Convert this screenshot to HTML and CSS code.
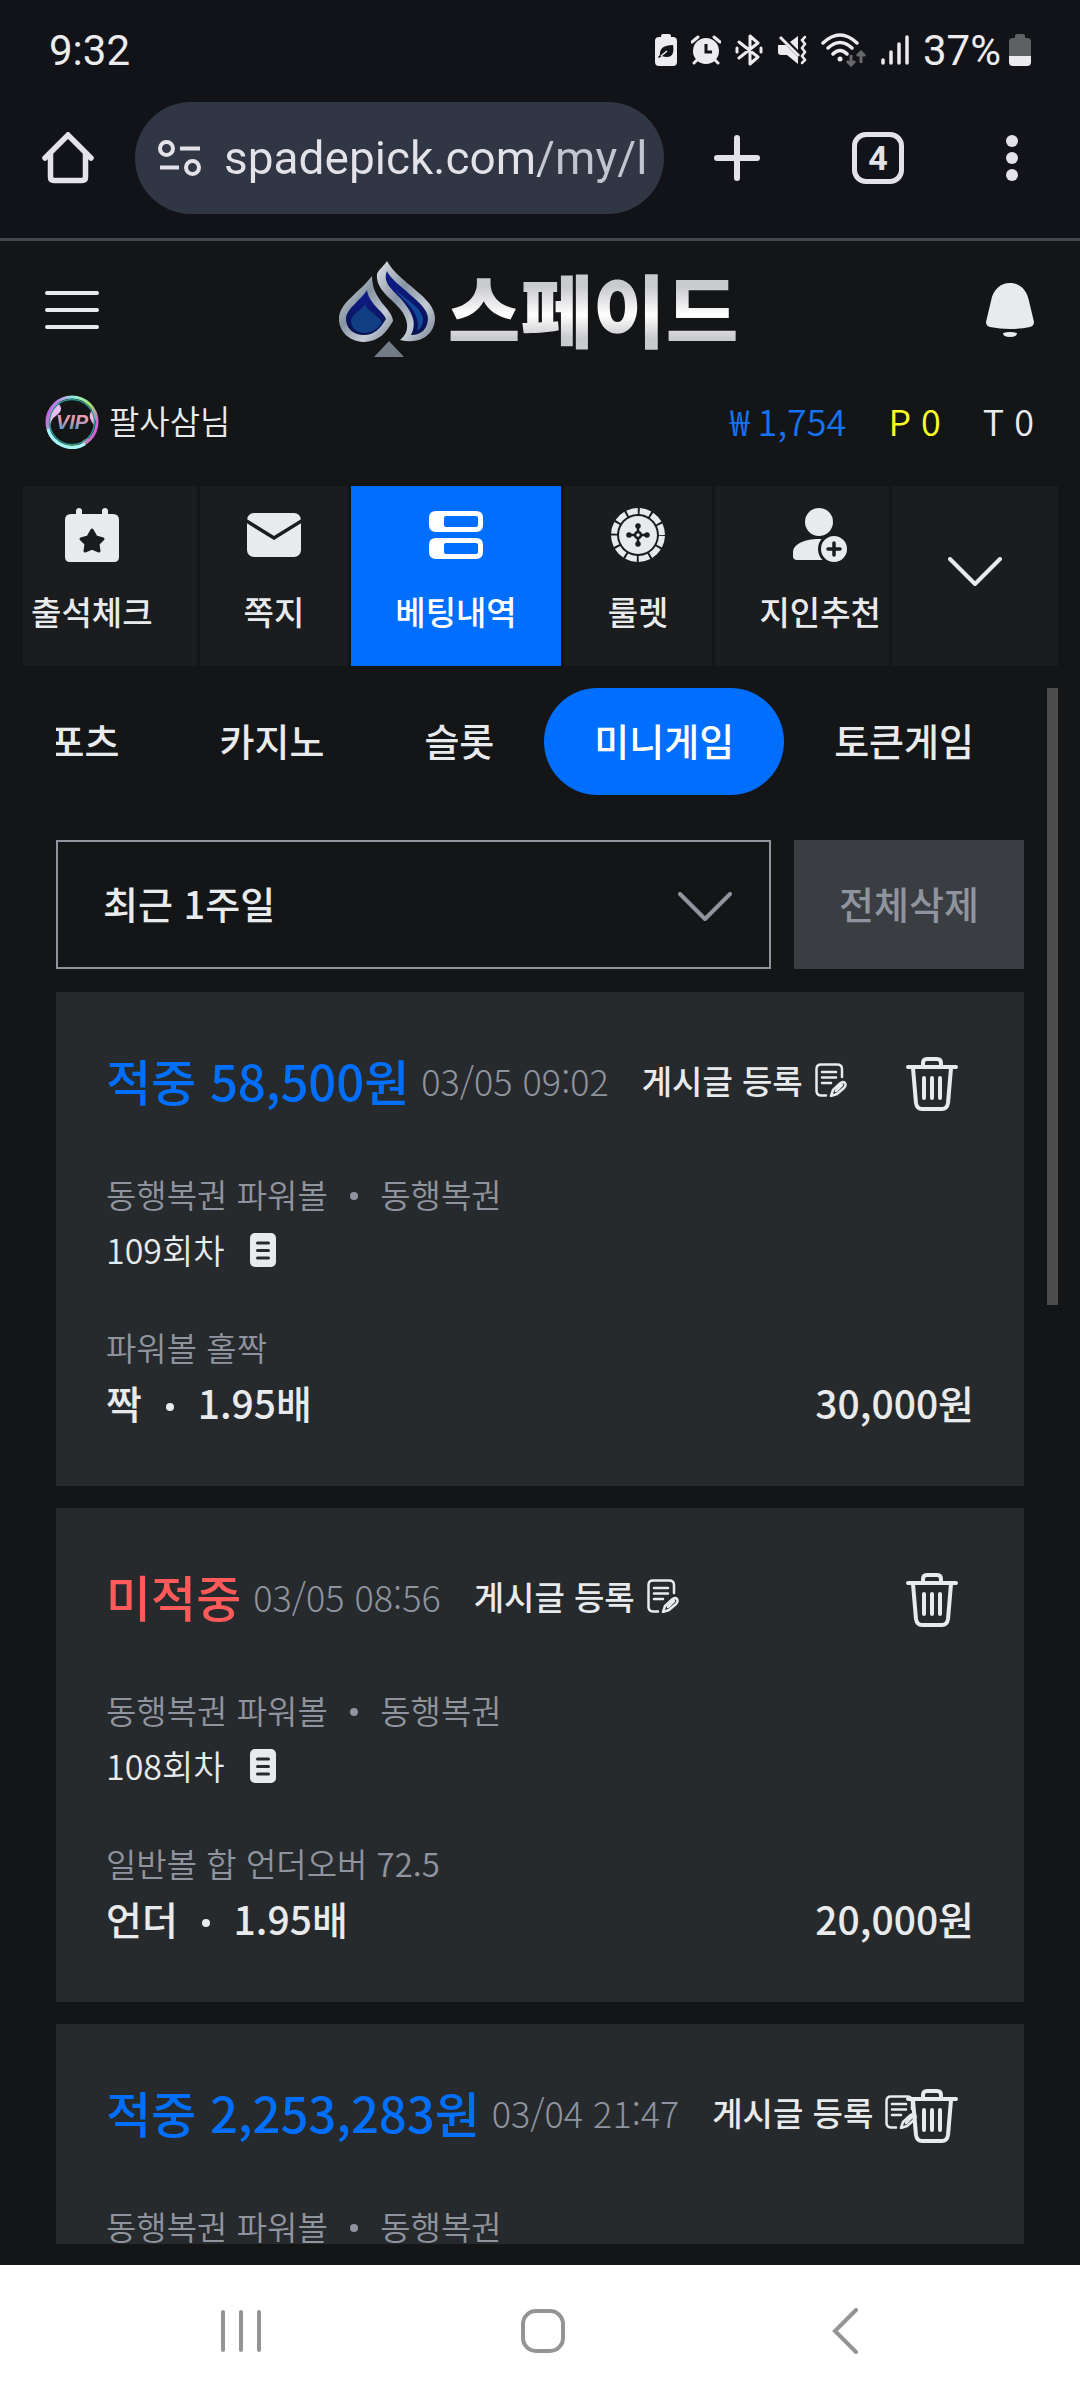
FILE: index.html
```html
<!DOCTYPE html>
<html lang="ko">
<head>
    <meta charset="UTF-8">
    <meta name="viewport" content="width=device-width, initial-scale=1.0">
    <title>스페이드 - 베팅내역</title>
    <link rel="stylesheet" href="styles.css">
</head>
<body>
    <!-- shared icons -->
    <svg class="sprite" aria-hidden="true">
        <symbol id="icon-trash" viewBox="0 0 52 54">
            <g fill="none" stroke="currentColor" stroke-width="4" stroke-linecap="round" stroke-linejoin="round">
                <path d="M2 10H50M17 9V6Q17 2 21 2H31Q35 2 35 6V9"/>
                <path d="M7 11L10 46Q11 52 16 52H36Q41 52 42 46L45 11"/>
                <path d="M18 21V41M26 21V41M34 21V41"/>
            </g>
        </symbol>
        <symbol id="icon-post" viewBox="0 0 32 34">
            <g fill="none" stroke="currentColor" stroke-width="2.500" stroke-linecap="round" stroke-linejoin="round">
                <path d="M11 32.500H6Q1.500 32 1.500 28V6Q1.500 1.500 6 1.500H22Q27 1.500 27 6V14"/>
                <path d="M7 9H21M7 14.500H21M7 20H16"/>
                <path d="M16 33L18 27L25 20.500Q28 18 30 20Q31.500 22 29 25L22 31ZM21 28L27 22"/>
            </g>
        </symbol>
        <symbol id="icon-doc" viewBox="0 0 26 34">
            <rect width="26" height="34" rx="5" fill="currentColor"/>
            <path d="M7.500 10H18.500M7.500 17.500H18.500M7.500 25H18.500" stroke="#272a2d" stroke-width="3" stroke-linecap="round"/>
        </symbol>
        <symbol id="icon-down" viewBox="0 0 54 30">
            <path d="M2 2L27 27L52 2" fill="none" stroke="currentColor" stroke-width="4" stroke-linecap="round" stroke-linejoin="round"/>
        </symbol>
    </svg>

    <div class="status-bar">
        <span>9:32</span>
        <div class="status-icons">
            <svg width="22" height="32" viewBox="0 0 22 32"><path d="M6 3V2Q6 0 8 0H14Q16 0 16 2V3H18Q22 3 22 7V28Q22 32 18 32H4Q0 32 0 28V7Q0 3 4 3Z" fill="#ececee"/><path d="M18 11Q20 23 12 23Q9 23 7 22L4 24L3 23L5 21Q4 11 18 11Z" fill="#121318"/><path d="M6 22L12 17" stroke="#ececee" stroke-width="1.500"/></svg>
            <svg width="30" height="30" viewBox="0 0 30 30"><circle cx="15" cy="16" r="13" fill="#ececee"/><path d="M1 7L7 2M29 7L23 2M6 25L3 28M24 25L27 28" stroke="#ececee" stroke-width="3" stroke-linecap="round"/><path d="M15 9V17H21" fill="none" stroke="#121318" stroke-width="3"/></svg>
            <svg width="28" height="32" viewBox="0 0 28 32"><path d="M4 8L23 23L15 30V2L23 9L4 24M2 14V18M26 14V18" fill="none" stroke="#ececee" stroke-width="3" stroke-linecap="round" stroke-linejoin="round"/></svg>
            <svg width="30" height="30" viewBox="0 0 30 30"><path d="M1 10H9L21 22V29L10 20H4Q1 20 1 17ZM13 7L21 1V15Z" fill="#ececee"/><path d="M3 2L22 21" stroke="#ececee" stroke-width="3"/><path d="M28 2L25 5L28 9L25 13L28 17L25 21L28 25L25 28" fill="none" stroke="#ececee" stroke-width="2.500" stroke-linecap="round"/></svg>
            <svg width="46" height="34" viewBox="0 0 46 34"><g fill="none" stroke="#ececee" stroke-width="3.500" stroke-linecap="round"><path d="M2 10Q19 -6 36 10M7 15Q19 4 31 15M12 21Q19 14 26 21"/></g><circle cx="19" cy="26" r="2.500" fill="#ececee"/><path d="M30 22V31M26 28L30 32L34 28M40 30V20M36 23L40 19L44 23" fill="none" stroke="#68696c" stroke-width="3"/></svg>
            <svg width="28" height="30" viewBox="0 0 28 30"><path d="M2 25V28M10 17V28M18 9V28M26 2V28" stroke="#ececee" stroke-width="3.500" stroke-linecap="round"/></svg>
            <span class="battery-text">37%</span>
            <svg width="22" height="32" viewBox="0 0 22 32"><path d="M6 4V2Q6 0 8 0H14Q16 0 16 2V4H18Q22 4 22 8V22H0V8Q0 4 4 4Z" fill="#5f6062"/><path d="M0 22H22V28Q22 32 18 32H4Q0 32 0 28Z" fill="#ececee"/></svg>
        </div>
    </div>

    <div class="browser-bar">
        <button class="bar-btn" aria-label="Home">
            <svg width="52" height="52" viewBox="0 0 52 52"><path d="M3 26L26 3L49 26M8.500 22V45Q8.500 48.500 12 48.500H40Q43.500 48.500 43.500 45V22" fill="none" stroke="currentColor" stroke-width="5.500" stroke-linecap="round" stroke-linejoin="miter"/></svg>
        </button>
        <label class="url-box">
            <svg width="44" height="36" viewBox="0 0 44 36"><g fill="none" stroke="currentColor" stroke-width="4"><circle cx="8.500" cy="8.500" r="6.500"/><circle cx="34.500" cy="27.500" r="6.500"/><path d="M22 8.500H42M2 27.500H21"/></g></svg>
            <input class="url-input" type="text" value="spadepick.com/my/l" aria-label="URL">
        </label>
        <div class="bar-actions">
            <button class="bar-btn" aria-label="New tab">
                <svg width="46" height="46" viewBox="0 0 46 46"><path d="M23 3V43M3 23H43" stroke="currentColor" stroke-width="6" stroke-linecap="round"/></svg>
            </button>
            <button class="bar-btn tab-count" aria-label="Tabs">4</button>
            <button class="bar-btn" aria-label="Menu">
                <svg width="12" height="46" viewBox="0 0 12 46"><g fill="currentColor"><circle cx="6" cy="6" r="6"/><circle cx="6" cy="23" r="6"/><circle cx="6" cy="40" r="6"/></g></svg>
            </button>
        </div>
    </div>

    <header class="site-header">
        <button class="icon-btn" aria-label="메뉴">
            <svg width="54" height="38" viewBox="0 0 54 38"><path d="M2 2H52M2 19H52M2 36H52" stroke="currentColor" stroke-width="4" stroke-linecap="round"/></svg>
        </button>
        <a class="logo" href="#">
            <svg width="97" height="97" viewBox="0 0 97 97">
                <defs>
                    <linearGradient id="silver" x1="0" y1="0" x2="1" y2="1">
                        <stop offset="0" stop-color="#dfe3e8"/>
                        <stop offset="0.4" stop-color="#8794a3"/>
                        <stop offset="0.7" stop-color="#c3ccd6"/>
                        <stop offset="1" stop-color="#75808e"/>
                    </linearGradient>
                    <linearGradient id="navy" x1="0" y1="0" x2="0" y2="1">
                        <stop offset="0" stop-color="#101c8c"/>
                        <stop offset="1" stop-color="#08124e"/>
                    </linearGradient>
                </defs>
                <path d="M33 15C20 32 0 42 0 58C0 71 11 81 26 81C40 80 47 72 54 60C54 48 33 40 33 15Z" fill="url(#silver)"/>
                <path d="M28 29C21 40 7 48 7 58C7 67 14 74 25 74C35 74 41 68 47 58C44 50 30 43 28 29Z" fill="url(#navy)"/>
                <path d="M26 43C22 50 12 53 12 60C13 69 19 72 26 72C34 72 40 67 43 61C38 53 29 51 26 43Z" fill="#113d83"/>
                <path d="M48 0C60 22 96 36 96 57C96 73 82 84 61 79C70 72 70 62 64 52C57 40 36 30 38 13C39 9 45 5 48 0Z" fill="url(#silver)"/>
                <path d="M48 10C54 24 89 42 89 57C89 68 82 74 72 74C79 61 72 50 62 38C54 29 43 22 48 10Z" fill="url(#navy)"/>
                <path d="M56 28C64 37 83 46 84 58Q84 66 78 70Q81 60 74 49C68 40 60 35 56 28Z" fill="#12489a"/>
                <path d="M50 80L65 96H35Z" fill="#727c86"/>
            </svg>
            <span class="logo-text">스페이드</span>
        </a>
        <button class="icon-btn" aria-label="알림">
            <svg width="48" height="54" viewBox="0 0 48 54"><path d="M24 0C34 0 41 7 43 18L48 39Q48 43 44 44Q24 48 4 44Q0 43 0 39L5 18C7 7 14 0 24 0ZM17 50Q24 48 31 50Q31 54 24 54Q17 54 17 50Z" fill="currentColor"/></svg>
        </button>
    </header>

    <div class="user-row">
        <div class="user-name">
            <svg width="54" height="54" viewBox="0 0 54 54">
                <defs>
                    <linearGradient id="ring" x1="0" y1="0.3" x2="1" y2="0.7">
                        <stop offset="0" stop-color="#c65be0"/>
                        <stop offset="0.35" stop-color="#8ff0e0"/>
                        <stop offset="0.7" stop-color="#a8e26a"/>
                        <stop offset="1" stop-color="#d94fe8"/>
                    </linearGradient>
                    <linearGradient id="vip" x1="0" y1="0" x2="0" y2="1">
                        <stop offset="0.4" stop-color="#e79bb0"/>
                        <stop offset="0.8" stop-color="#5f9ccc"/>
                    </linearGradient>
                </defs>
                <path d="M12 7Q20 14 12 20Q4 25 5 36Q-1 20 12 7ZM48 14Q41 20 49 30Q52 22 48 14ZM36 48Q40 43 44 44L38 50Z" fill="#e9bdf0"/>
                <circle cx="27" cy="27" r="25" fill="none" stroke="url(#ring)" stroke-width="3"/>
                <circle cx="27" cy="27" r="22.500" fill="none" stroke="#2d8f8f" stroke-width="1.500"/>
                <path d="M3 34A25 25 0 0 0 40 49" fill="none" stroke="#a5f3f5" stroke-width="3"/>
                <text x="27" y="34" text-anchor="middle" class="vip-text" fill="url(#vip)">VIP</text>
            </svg>
            <span>팔사삼님</span>
        </div>
        <div class="balances">
            <span class="won">₩ 1,754</span>
            <span class="point">P 0</span>
            <span>T 0</span>
        </div>
    </div>

    <div class="menu-row">
        <nav class="menu">
            <a class="menu-item" href="#">
                <svg width="54" height="54" viewBox="0 0 54 54"><path d="M11 6V3Q11 0 14 0Q17 0 17 3V6H37V3Q37 0 40 0Q43 0 43 3V6H48Q54 6 54 12V49Q54 54 49 54H5Q0 54 0 49V12Q0 6 6 6Z" fill="currentColor"/><path d="M27 22L31 29L38 31L33 36L34 43L27 40L20 43L21 36L16 31L23 29Z" fill="#1b1c1e" stroke="#1b1c1e" stroke-width="3" stroke-linejoin="round"/></svg>
                출석체크
            </a>
            <a class="menu-item" href="#">
                <svg width="54" height="54" viewBox="0 0 54 54"><rect y="5" width="54" height="44" rx="7" fill="currentColor"/><path d="M-2 12L27 30L56 12" fill="none" stroke="#1b1c1e" stroke-width="3.500"/></svg>
                쪽지
            </a>
            <a class="menu-item active" href="#">
                <svg width="54" height="54" viewBox="0 0 54 54"><path fill-rule="evenodd" d="M7 3H47Q54 3 54 10V17Q54 24 47 24H7Q0 24 0 17V10Q0 3 7 3ZM17 8Q15 8 15 10V17Q15 19 17 19H47Q49 19 49 17V10Q49 8 47 8ZM7 30H47Q54 30 54 37V44Q54 51 47 51H7Q0 51 0 44V37Q0 30 7 30ZM17 35Q15 35 15 37V44Q15 46 17 46H47Q49 46 49 44V37Q49 35 47 35Z" fill="currentColor"/></svg>
                베팅내역
            </a>
            <a class="menu-item" href="#">
                <svg width="54" height="54" viewBox="0 0 54 54"><circle cx="27" cy="27" r="24" fill="none" stroke="currentColor" stroke-width="6" stroke-dasharray="10.570 2" stroke-dashoffset="-1"/><circle cx="27" cy="27" r="19" fill="currentColor"/><g stroke="#1b1c1e" stroke-width="2.500" fill="#1b1c1e"><path d="M27 18V36M18 27H36"/><circle cx="27" cy="18" r="1.500"/><circle cx="27" cy="36" r="1.500"/><circle cx="18" cy="27" r="1.500"/><circle cx="36" cy="27" r="1.500"/><circle cx="27" cy="27" r="3"/></g><circle cx="27" cy="27" r="1.700" fill="currentColor"/></svg>
                룰렛
            </a>
            <a class="menu-item" href="#">
                <svg width="54" height="54" viewBox="0 0 54 54"><circle cx="26" cy="14" r="14" fill="currentColor"/><path d="M0 48V44C0 36 12 30 30 31V52H4Q0 52 0 48Z" fill="currentColor"/><circle cx="41" cy="41" r="14.500" fill="currentColor" stroke="#1b1c1e" stroke-width="3"/><path d="M41 35V47M35 41H47" stroke="#1b1c1e" stroke-width="3.500" stroke-linecap="round"/></svg>
                지인추천
            </a>
        </nav>
        <button class="menu-more" aria-label="더보기">
            <svg width="54" height="30"><use href="#icon-down"/></svg>
        </button>
    </div>

    <main class="content">
        <div class="list">
            <nav class="tabs">
                <a class="tab" href="#">스포츠</a>
                <a class="tab" href="#">카지노</a>
                <a class="tab" href="#">슬롯</a>
                <a class="tab active" href="#">미니게임</a>
                <a class="tab" href="#">토큰게임</a>
            </nav>

            <div class="filter">
                <div class="select-wrap">
                    <select class="period" aria-label="기간">
                        <option>최근 1주일</option>
                    </select>
                    <svg class="select-arrow" width="54" height="30"><use href="#icon-down"/></svg>
                </div>
                <button class="delete-all">전체삭제</button>
            </div>

            <article class="card">
                <div class="card-head">
                    <h2 class="result win">적중 58,500원</h2>
                    <time class="date">03/05 09:02</time>
                    <button class="post-btn">게시글 등록 <svg width="32" height="34"><use href="#icon-post"/></svg></button>
                </div>
                <button class="trash-btn" aria-label="삭제"><svg width="52" height="54"><use href="#icon-trash"/></svg></button>
                <div class="game">
                    <p class="muted">동행복권 파워볼 <i class="dot"></i> 동행복권</p>
                    <p class="round">109회차 <svg width="26" height="34"><use href="#icon-doc"/></svg></p>
                </div>
                <div class="bet">
                    <p class="muted">파워볼 홀짝</p>
                    <p class="pick"><span>짝 <i class="dot"></i> 1.95배</span><span>30,000원</span></p>
                </div>
            </article>

            <article class="card">
                <div class="card-head">
                    <h2 class="result lose">미적중</h2>
                    <time class="date">03/05 08:56</time>
                    <button class="post-btn">게시글 등록 <svg width="32" height="34"><use href="#icon-post"/></svg></button>
                </div>
                <button class="trash-btn" aria-label="삭제"><svg width="52" height="54"><use href="#icon-trash"/></svg></button>
                <div class="game">
                    <p class="muted">동행복권 파워볼 <i class="dot"></i> 동행복권</p>
                    <p class="round">108회차 <svg width="26" height="34"><use href="#icon-doc"/></svg></p>
                </div>
                <div class="bet">
                    <p class="muted">일반볼 합 언더오버 72.5</p>
                    <p class="pick"><span>언더 <i class="dot"></i> 1.95배</span><span>20,000원</span></p>
                </div>
            </article>

            <article class="card">
                <div class="card-head">
                    <h2 class="result win">적중 2,253,283원</h2>
                    <time class="date">03/04 21:47</time>
                    <button class="post-btn">게시글 등록 <svg width="32" height="34"><use href="#icon-post"/></svg></button>
                </div>
                <button class="trash-btn" aria-label="삭제"><svg width="52" height="54"><use href="#icon-trash"/></svg></button>
                <div class="game">
                    <p class="muted">동행복권 파워볼 <i class="dot"></i> 동행복권</p>
                </div>
            </article>
        </div>
        <div class="scrollbar"><div class="thumb"></div></div>
    </main>

    <div class="nav-bar">
        <button class="nav-btn" aria-label="Recents">
            <svg width="42" height="46" viewBox="0 0 42 46"><path d="M3 4V42M21 4V42M39 4V42" stroke="currentColor" stroke-width="4" stroke-linecap="round"/></svg>
        </button>
        <button class="nav-btn" aria-label="Home">
            <svg width="46" height="46" viewBox="0 0 46 46"><rect x="3" y="3" width="40" height="40" rx="13" fill="none" stroke="currentColor" stroke-width="4"/></svg>
        </button>
        <button class="nav-btn" aria-label="Back">
            <svg width="42" height="46" viewBox="0 0 42 46"><path d="M32 2L11 23L32 44" fill="none" stroke="currentColor" stroke-width="4" stroke-linecap="round"/></svg>
        </button>
    </div>
</body>
</html>
```

FILE: styles.css
```css
* {
    box-sizing: border-box;
}
body {
    margin: 0;
    height: 100vh;
    display: flex;
    flex-direction: column;
    overflow: hidden;
    background-color: #141517;
    color: #e9eaec;
    font-family: "Noto Sans CJK KR", sans-serif;
    font-size: 33px;
    white-space: nowrap;
}
button, input, select {
    font-family: inherit;
    font-size: inherit;
    color: inherit;
    background: none;
    border: none;
    padding: 0;
    margin: 0;
}
a {
    color: inherit;
    text-decoration: none;
}
svg {
    display: block;
    flex: none;
}
h2, p {
    margin: 0;
}
.sprite {
    position: absolute;
    width: 0;
    height: 0;
}

/* phone status bar */
.status-bar {
    height: 100px;
    padding: 0 49px;
    display: flex;
    justify-content: space-between;
    align-items: center;
    background-color: #121318;
    color: #ececee;
    font-family: Roboto, sans-serif;
    font-size: 42px;
}
.status-icons {
    display: flex;
    align-items: center;
    gap: 14px;
}
.battery-text {
    margin-right: -6px;
}

/* browser toolbar */
.browser-bar {
    height: 141px;
    padding: 0 62px 23px 42px;
    display: flex;
    align-items: center;
    background-color: #121318;
    border-bottom: 3px solid #45464d;
    color: #e3e2e9;
}
.bar-btn {
    flex: none;
}
.bar-actions {
    display: flex;
    align-items: center;
    gap: 92px;
}
.url-box {
    flex: 1;
    min-width: 0;
    height: 112px;
    margin: 0 50px 0 41px;
    padding: 0 17px 0 23px;
    display: flex;
    align-items: center;
    gap: 22px;
    border-radius: 56px;
    background-color: #313644;
}
.url-input {
    flex: 1;
    min-width: 0;
    font-family: Roboto, sans-serif;
    font-size: 46px;
    color: transparent;
    background: linear-gradient(to right, #e3e2e9 316px, #c2c4d0 316px);
    background-clip: text;
    -webkit-background-clip: text;
}
.tab-count {
    width: 52px;
    height: 52px;
    margin-right: 10px;
    border: 5px solid #e3e2e9;
    border-radius: 14px;
    font-family: Roboto, sans-serif;
    font-size: 34px;
    font-weight: bold;
    line-height: 42px;
}

/* site header */
.site-header {
    height: 134px;
    padding: 3px 46px 0 45px;
    display: flex;
    align-items: center;
    justify-content: space-between;
}
.logo {
    padding-right: 8px;
    display: flex;
    align-items: center;
    gap: 12px;
}
.logo-text {
    padding-bottom: 4px;
    font-size: 79px;
    font-weight: 900;
    line-height: 90px;
    color: transparent;
    background: linear-gradient(#c9cacd 25%, #ffffff 55%, #c9cacd 80%);
    background-clip: text;
    -webkit-background-clip: text;
}
.user-row {
    height: 111px;
    padding: 0 46px 17px 45px;
    display: flex;
    align-items: center;
    justify-content: space-between;
    font-weight: 350;
}
.user-name {
    display: flex;
    align-items: center;
    gap: 10px;
}
.user-name span, .balances {
    padding-bottom: 4px;
}
.vip-text {
    font-family: "Liberation Sans", sans-serif;
    font-size: 20px;
    font-weight: bold;
    font-style: italic;
}
.balances {
    display: flex;
    gap: 42px;
    font-size: 36px;
}
.won {
    color: #1473f0;
}
.point {
    color: #fbff26;
}

/* menu tiles */
.menu-row {
    margin: 0 22px 22px 23px;
    display: flex;
    gap: 3px;
}
.menu {
    flex: 1;
    min-width: 0;
    display: flex;
    justify-content: center;
    gap: 3px;
    overflow: hidden;
}
.menu-item {
    flex: none;
    height: 180px;
    padding: 22px 44px 0;
    display: flex;
    flex-direction: column;
    align-items: center;
    gap: 25px;
    background-color: #1b1c1e;
    font-weight: 500;
    line-height: 48px;
}
.menu-item.active, .tab.active {
    background-color: #006fff;
    color: #ffffff;
}
.menu-more {
    width: 166px;
    padding-bottom: 8px;
    display: flex;
    align-items: center;
    justify-content: center;
    background-color: #1b1c1e;
}

/* betting list */
.content {
    flex: 1;
    min-height: 0;
    margin: 0 22px 21px 23px;
    display: flex;
    overflow: hidden;
}
.list {
    flex: 1;
    min-width: 0;
    padding: 0 23px 0 33px;
}
.scrollbar {
    width: 11px;
}
.thumb {
    height: 617px;
    background-color: #4b4c4b;
}
.tabs {
    margin-bottom: 45px;
    display: flex;
    justify-content: flex-end;
    overflow: hidden;
}
.tab {
    flex: none;
    padding: 0 50px 4px;
    border-radius: 54px;
    font-size: 38px;
    font-weight: 500;
    line-height: 103px;
}
.filter {
    height: 129px;
    display: flex;
    gap: 23px;
    font-size: 38px;
    font-weight: 500;
}
.select-wrap {
    flex: 1;
    position: relative;
    color: #8f949e;
}
.period {
    width: 100%;
    height: 100%;
    padding: 0 45px 4px;
    appearance: none;
    border: 2px solid #8f949e;
    color: #e9eaec;
    font-weight: 500;
}
.select-arrow {
    position: absolute;
    right: 39px;
    top: 52px;
    pointer-events: none;
}
.delete-all {
    width: 230px;
    padding-bottom: 4px;
    background-color: #3a3e42;
    color: #8f949e;
    font-weight: 500;
}
.card {
    position: relative;
    min-height: 494px;
    margin-top: 22px;
    padding: 56px 50px 0;
    background-color: #272a2d;
}
.filter + .card {
    margin-top: 23px;
}
.card-head {
    height: 64px;
    display: flex;
    align-items: center;
}
.result {
    font-size: 49px;
    font-weight: 500;
    line-height: 64px;
}
.win {
    color: #006fff;
}
.lose {
    color: #ff5a5a;
}
.date {
    margin: 0 33px 0 12px;
    font-size: 36px;
    font-weight: 300;
    color: #8f949e;
}
.post-btn {
    display: flex;
    align-items: center;
    gap: 12px;
    font-weight: 500;
}
.trash-btn {
    position: absolute;
    top: 65px;
    right: 66px;
}
.game {
    margin-top: 55px;
    font-weight: 350;
    line-height: 55px;
}
.muted {
    color: #8f949e;
    font-weight: 350;
}
.dot {
    display: inline-block;
    width: 8px;
    height: 8px;
    margin: 0 13px;
    border-radius: 50%;
    background-color: currentColor;
    vertical-align: 8px;
}
.round {
    display: flex;
    align-items: center;
    gap: 25px;
    font-size: 34px;
}
.bet {
    margin-top: 43px;
    line-height: 55px;
}
.pick {
    display: flex;
    justify-content: space-between;
    font-size: 39px;
    font-weight: 500;
}

/* phone navigation */
.nav-bar {
    height: 135px;
    padding: 0 84px 3px 90px;
    display: flex;
    background-color: #ffffff;
    color: #949494;
}
.nav-btn {
    flex: 1;
    display: flex;
    align-items: center;
    justify-content: center;
}
```
